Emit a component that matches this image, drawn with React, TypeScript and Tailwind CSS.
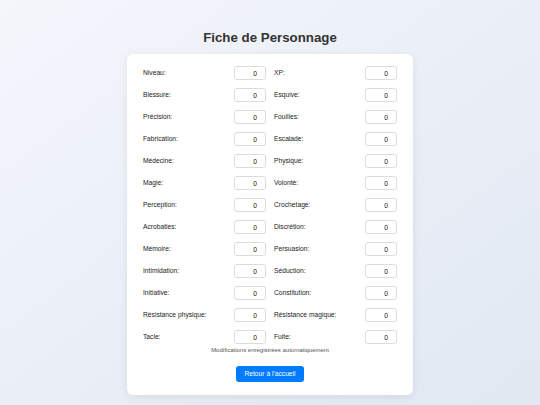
import React from "react";

const fields: [string, string][] = [
  ["Niveau:", "XP:"],
  ["Blessure:", "Esquive:"],
  ["Précision:", "Fouilles:"],
  ["Fabrication:", "Escalade:"],
  ["Médecine:", "Physique:"],
  ["Magie:", "Volonté:"],
  ["Perception:", "Crochetage:"],
  ["Acrobaties:", "Discrétion:"],
  ["Mémoire:", "Persuasion:"],
  ["Intimidation:", "Séduction:"],
  ["Initiative:", "Constitution:"],
  ["Résistance physique:", "Résistance magique:"],
  ["Tacle:", "Fuite:"],
];

function Field({ label }: { label: string }) {
  return (
    <div className="flex h-[14px] items-center justify-between">
      <label className="text-[6.7px] leading-[8px] text-[#222]">{label}</label>
      <input
        type="text"
        defaultValue="0"
        className="box-border h-[14px] w-[32px] rounded-[3px] border border-[#dcdcdc] bg-white pr-[8px] text-right text-[6.7px] leading-[12px] text-[#111] outline-none"
        style={{ fontFamily: '"Liberation Sans", Arial, sans-serif' }}
      />
    </div>
  );
}

export default function App() {
  return (
    <div
      className="flex min-h-screen flex-col items-center bg-gradient-to-br from-[#f4f6fc] to-[#e1e8f2] pt-[30px]"
      style={{ fontFamily: '"Liberation Sans", Arial, sans-serif' }}
    >
      <h1 className="mb-[8px] text-[13.3px] font-bold leading-[16px] text-[#333]">
        Fiche de Personnage
      </h1>
      <div className="flex w-[286px] flex-col items-center rounded-[6px] bg-white px-[16px] pb-[13px] pt-[12px] shadow-[0_2px_10px_rgba(0,0,0,0.08)]">
        <div className="grid w-full grid-cols-2 gap-x-[8px] gap-y-[8px]">
          {fields.map(([a, b]) => (
            <React.Fragment key={a}>
              <Field label={a} />
              <Field label={b} />
            </React.Fragment>
          ))}
        </div>
        <p className="mt-[3px] text-center text-[6px] leading-[7px] text-[#555]">
          Modifications enregistrées automatiquement
        </p>
        <button className="mt-[12px] h-[16px] rounded-[3px] bg-[#007bff] px-[8px] text-[6.7px] leading-[16px] text-white">
          Retour à l'accueil
        </button>
      </div>
    </div>
  );
}
